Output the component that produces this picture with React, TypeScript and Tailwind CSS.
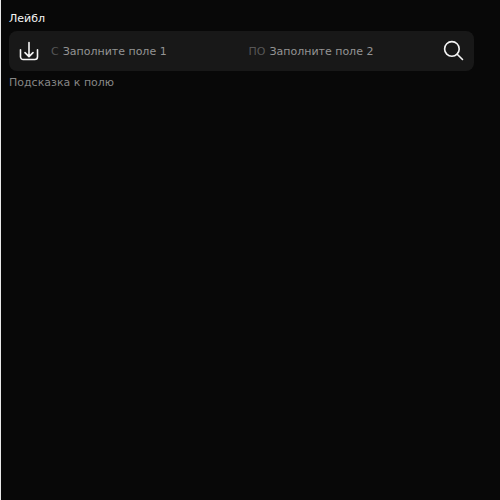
type PartProps = { id: string; prefix: string; placeholder: string };

function RangePart({ id, prefix, placeholder }: PartProps) {
  return (
    <div className="flex min-w-0 flex-1 items-center gap-1">
      <label htmlFor={id} className="text-[#565656]">{prefix}</label>
      <input
        id={id}
        type="text"
        placeholder={placeholder}
        className="w-full min-w-0 flex-1 bg-transparent text-white outline-none placeholder:text-[#949494]"
      />
    </div>
  );
}

export default function App() {
  return (
    <main className="min-h-screen border-l border-[#e8e8e8] bg-[#080808] py-[11px] pr-[26px] pl-2 font-['DejaVu_Sans',sans-serif] text-[11px] leading-4 text-white">
      <fieldset>
        <legend className="mb-1 text-[#f5f5f5]">Лейбл</legend>
        <div className="flex h-10 items-center rounded-lg bg-[#181818] px-2">
          <button type="button" aria-label="Загрузить" className="mr-2.5 size-6 shrink-0">
            <svg viewBox="0 0 24 24" className="size-6" fill="none" stroke="#f5f5f5" strokeWidth="1.6" strokeLinecap="round" strokeLinejoin="round">
              <path d="M12 3.5v14M8 13.6l4 4 4-4M3.5 10.8v7a2.7 2.7 0 0 0 2.7 2.7h11.6a2.7 2.7 0 0 0 2.7-2.7v-7" />
            </svg>
          </button>
          <div className="flex min-w-0 flex-1 gap-3 pt-0.5">
            <RangePart id="range-from" prefix="С" placeholder="Заполните поле 1" />
            <RangePart id="range-to" prefix="ПО" placeholder="Заполните поле 2" />
          </div>
          <button type="button" aria-label="Поиск" className="ml-2 size-6 shrink-0">
            <svg viewBox="0 0 24 24" className="size-6" fill="none" stroke="#f5f5f5" strokeWidth="1.6" strokeLinecap="round">
              <circle cx="9.9" cy="9.9" r="7.3" />
              <path d="M15.2 15.2l5.3 5.3" />
            </svg>
          </button>
        </div>
        <p className="mt-1 text-[#868686]">Подсказка к полю</p>
      </fieldset>
    </main>
  );
}
